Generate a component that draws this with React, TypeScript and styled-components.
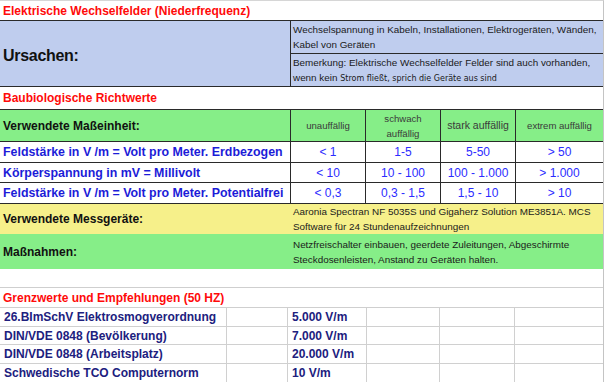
import styled, { createGlobalStyle } from 'styled-components';

const GlobalStyle = createGlobalStyle`
  html, body {
    margin: 0;
    padding: 0;
    background: #fff;
  }
  * {
    box-sizing: border-box;
  }
`;

const ratings = [
  { label: 'Feldstärke in V /m = Volt pro Meter. Erdbezogen', values: ['< 1', '1-5', '5-50', '> 50'] },
  { label: 'Körperspannung in mV = Millivolt', values: ['< 10', '10 - 100', '100 - 1.000', '> 1.000'] },
  { label: 'Feldstärke in V /m = Volt pro Meter. Potentialfrei', values: ['< 0,3', '0,3 - 1,5', '1,5 - 10', '> 10'] },
];

const rowHeights = [21, 20, 21];

const limits = [
  { name: '26.BImSchV Elektrosmogverordnung', value: '5.000 V/m', h: 19 },
  { name: 'DIN/VDE 0848 (Bevölkerung)', value: '7.000 V/m', h: 18 },
  { name: 'DIN/VDE 0848 (Arbeitsplatz)', value: '20.000 V/m', h: 19 },
  { name: 'Schwedische TCO Computernorm', value: '10 V/m', h: 19 },
];

const App = () => {
  return (
    <>
      <GlobalStyle />
      <Sheet>
        <TitleRow $h={19}>Elektrische Wechselfelder (Niederfrequenz)</TitleRow>

        <CauseBlock>
          <CauseLabel>Ursachen:</CauseLabel>
          <CauseList>
            <CauseText>
              <Lines>
                Wechselspannung in Kabeln, Installationen, Elektrogeräten, Wänden,
                <br />
                Kabel von Geräten
              </Lines>
            </CauseText>
            <CauseText>
              <Lines>
                Bemerkung: Elektrische Wechselfelder Felder sind auch vorhanden,
                <br />
                wenn kein <SmallFont>Strom fließt, sprich die Geräte aus sind</SmallFont>
              </Lines>
            </CauseText>
          </CauseList>
        </CauseBlock>

        <TitleRow $h={22}>Baubiologische Richtwerte</TitleRow>

        <RatingTable>
          <HeadLabel>Verwendete Maßeinheit:</HeadLabel>
          <HeadCell>unauffällig</HeadCell>
          <HeadCell>
            <Lines>
              schwach
              <br />
              auffällig
            </Lines>
          </HeadCell>
          <HeadCell $size={10.5}>stark auffällig</HeadCell>
          <HeadCell $last>extrem auffällig</HeadCell>
          {ratings.map((r, i) => (
            <RatingRow key={r.label} $h={rowHeights[i]}>
              <RatingLabel>{r.label}</RatingLabel>
              {r.values.map((v, j) => (
                <ValueCell key={v} $last={j === r.values.length - 1}>
                  {v}
                </ValueCell>
              ))}
            </RatingRow>
          ))}
        </RatingTable>

        <InfoRow $bg="#f6f08a" $h={30}>
          <InfoLabel>Verwendete Messgeräte:</InfoLabel>
          <InfoText>
            <Lines>
              Aaronia Spectran NF 5035S und Gigaherz Solution ME3851A. MCS
              <br />
              Software für 24 Stundenaufzeichnungen
            </Lines>
          </InfoText>
        </InfoRow>
        <InfoRow $bg="#86ee88" $h={35}>
          <InfoLabel>Maßnahmen:</InfoLabel>
          <InfoText>
            <Lines>
              Netzfreischalter einbauen, geerdete Zuleitungen, Abgeschirmte
              <br />
              Steckdosenleisten, Anstand zu Geräten halten.
            </Lines>
          </InfoText>
        </InfoRow>

        <Spacer />

        <TitleRow $h={21} $grid>
          Grenzwerte und Empfehlungen (50 HZ)
        </TitleRow>

        <LimitTable>
          {limits.map((l) => (
            <LimitRow key={l.name} $h={l.h}>
              <LimitCell>{l.name}</LimitCell>
              <LimitCell />
              <LimitCell>{l.value}</LimitCell>
              <LimitCell />
              <LimitCell />
              <LimitCell $last />
            </LimitRow>
          ))}
        </LimitTable>
      </Sheet>
    </>
  );
};

export default App;

const Sheet = styled.div`
  width: 604px;
  border-top: 1px solid #d6d6d6;
  border-right: 1px solid #c4c4c4;
  font-family: 'Liberation Sans', Arial, sans-serif;
  background: #fff;
`;

const Lines = styled.div`
  white-space: nowrap;
`;

const TitleRow = styled.div<{ $h: number; $grid?: boolean }>`
  height: ${(p) => p.$h}px;
  display: flex;
  align-items: center;
  padding-left: 3px;
  color: #ff0a0a;
  font-size: 12px;
  font-weight: 700;
  border-top: ${(p) => (p.$grid ? '1px solid #cfcfcf' : 'none')};
  border-bottom: ${(p) => (p.$grid ? '1px solid #cfcfcf' : 'none')};
`;

const CauseBlock = styled.div`
  display: grid;
  grid-template-columns: 290px 1fr;
  height: 67px;
  background: #bfcdee;
  border-top: 1px solid #2a2a2a;
  border-bottom: 1px solid #2a2a2a;
`;

const CauseLabel = styled.div`
  display: flex;
  align-items: center;
  padding: 4px 0 0 3px;
  color: #111;
  font-size: 16px;
  font-weight: 700;
  letter-spacing: -0.3px;
`;

const CauseList = styled.div`
  display: grid;
  grid-template-rows: 32px 1fr;
  border-left: 1px solid #2a2a2a;
`;

const CauseText = styled.div`
  display: flex;
  align-items: center;
  padding-left: 2px;
  color: #1a1a1a;
  font-size: 9.9px;
  line-height: 15px;
  & + & {
    border-top: 1px solid #2a2a2a;
  }
`;

const SmallFont = styled.span`
  font-family: 'DejaVu Sans', Tahoma, sans-serif;
  font-size: 8px;
`;

const RatingTable = styled.div`
  display: grid;
  grid-template-columns: 291px 75px 75px 75px 1fr;
  grid-template-rows: 32px;
  border-top: 1px solid #2a2a2a;
`;

const HeadLabel = styled.div`
  display: flex;
  align-items: center;
  padding-left: 3px;
  background: #86ee88;
  border-right: 1px solid #2a2a2a;
  border-bottom: 1px solid #2a2a2a;
  color: #111;
  font-size: 12px;
  font-weight: 700;
`;

const HeadCell = styled.div<{ $last?: boolean; $size?: number }>`
  display: flex;
  align-items: center;
  justify-content: center;
  text-align: center;
  background: #86ee88;
  border-right: ${(p) => (p.$last ? 'none' : '1px solid #2a2a2a')};
  border-bottom: 1px solid #2a2a2a;
  color: #3a3a3a;
  font-size: ${(p) => p.$size ?? 9.6}px;
  line-height: 15px;
`;

const RatingRow = styled.div<{ $h: number }>`
  display: contents;
  & > * {
    height: ${(p) => p.$h}px;
  }
`;

const RatingLabel = styled.div`
  display: flex;
  align-items: center;
  padding-left: 3px;
  border-right: 1px solid #2a2a2a;
  border-bottom: 1px solid #2a2a2a;
  color: #1c1cd8;
  font-size: 12.4px;
  font-weight: 700;
  white-space: nowrap;
`;

const ValueCell = styled.div<{ $last?: boolean }>`
  display: flex;
  align-items: center;
  justify-content: center;
  border-right: ${(p) => (p.$last ? 'none' : '1px solid #2a2a2a')};
  border-bottom: 1px solid #2a2a2a;
  color: #2c2cff;
  font-size: 12px;
`;

const InfoRow = styled.div<{ $bg: string; $h: number }>`
  display: grid;
  grid-template-columns: 291px 1fr;
  height: ${(p) => p.$h}px;
  background: ${(p) => p.$bg};
`;

const InfoLabel = styled.div`
  display: flex;
  align-items: center;
  padding-left: 3px;
  color: #111;
  font-size: 12px;
  font-weight: 700;
`;

const InfoText = styled.div`
  display: flex;
  align-items: center;
  padding-left: 2px;
  color: #1a1a1a;
  font-size: 9.9px;
  line-height: 15px;
`;

const Spacer = styled.div`
  height: 18px;
`;

const LimitTable = styled.div`
  display: grid;
  grid-template-columns: 227px 61px 79px 73px 75px 1fr;
`;

const LimitRow = styled.div<{ $h: number }>`
  display: contents;
  & > * {
    height: ${(p) => p.$h}px;
  }
`;

const LimitCell = styled.div<{ $last?: boolean }>`
  display: flex;
  align-items: center;
  padding-left: 4px;
  border-right: ${(p) => (p.$last ? 'none' : '1px solid #d0d0d0')};
  border-bottom: 1px solid #d0d0d0;
  color: #20207e;
  font-size: 12px;
  font-weight: 700;
  white-space: nowrap;
`;
